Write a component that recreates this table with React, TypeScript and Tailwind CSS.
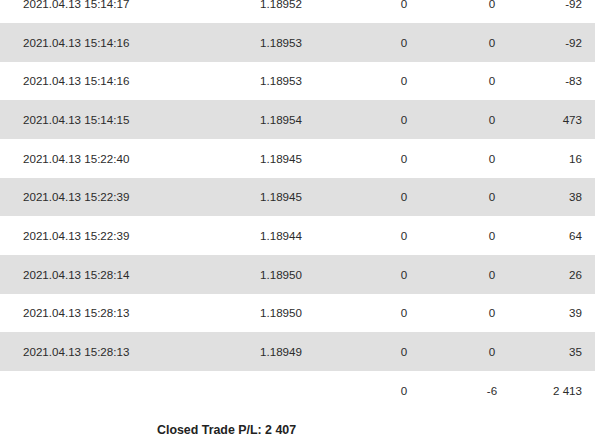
const rows: [string, string, string, string, string][] = [
  ['2021.04.13 15:14:17', '1.18952', '0', '0', '-92'],
  ['2021.04.13 15:14:16', '1.18953', '0', '0', '-92'],
  ['2021.04.13 15:14:16', '1.18953', '0', '0', '-83'],
  ['2021.04.13 15:14:15', '1.18954', '0', '0', '473'],
  ['2021.04.13 15:22:40', '1.18945', '0', '0', '16'],
  ['2021.04.13 15:22:39', '1.18945', '0', '0', '38'],
  ['2021.04.13 15:22:39', '1.18944', '0', '0', '64'],
  ['2021.04.13 15:28:14', '1.18950', '0', '0', '26'],
  ['2021.04.13 15:28:13', '1.18950', '0', '0', '39'],
  ['2021.04.13 15:28:13', '1.18949', '0', '0', '35'],
];

const rowCls =
  'grid grid-cols-[200px_162px_84px_92px_1fr] items-center h-[38.67px]';

export default function App() {
  return (
    <div className="w-[600px] h-[444px] overflow-hidden bg-white font-['Liberation_Sans',Arial,sans-serif] text-[11.6px] text-[#2b2b2b]">
      <div className="w-[595px] -mt-[15.67px]">
        {rows.map((r, i) => (
          <div key={i} className={`${rowCls} ${i % 2 === 1 ? 'bg-[#e0e0e0]' : 'bg-white'}`}>
            <div className="pl-[23px]">{r[0]}</div>
            <div className="text-center">{r[1]}</div>
            <div className="text-center">{r[2]}</div>
            <div className="text-center">{r[3]}</div>
            <div className="text-right pr-[13px]">{r[4]}</div>
          </div>
        ))}
        {/* totals */}
        <div className={rowCls}>
          <div />
          <div />
          <div className="text-center">0</div>
          <div className="text-center">-6</div>
          <div className="text-right pr-[13px]">2 413</div>
        </div>
      </div>
      <div className="pl-[157px] pt-[11px] text-[12.4px] font-bold text-[#222]">
        Closed Trade P/L: 2 407
      </div>
    </div>
  );
}
